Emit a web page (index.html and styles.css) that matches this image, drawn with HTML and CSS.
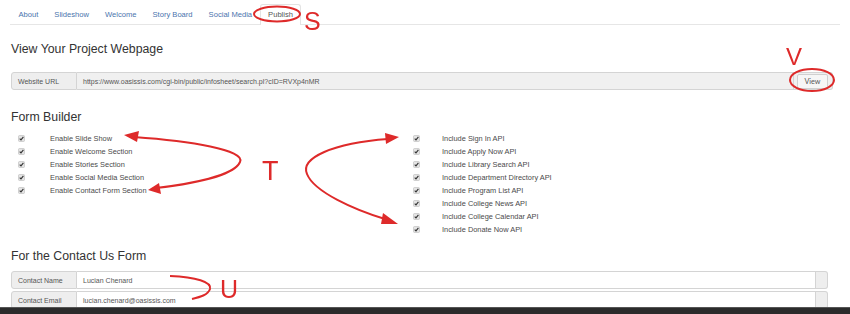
FILE: index.html
```html
<!DOCTYPE html>
<html>
<head>
<meta charset="utf-8">
<link rel="stylesheet" href="styles.css">
</head>
<body>
<nav class="tabs">
  <a class="tab">About</a>
  <a class="tab">Slideshow</a>
  <a class="tab">Welcome</a>
  <a class="tab">Story Board</a>
  <a class="tab">Social Media</a>
  <a class="tab active">Publish</a>
</nav>

<main class="page">
  <h2 class="title first">View Your Project Webpage</h2>
  <div class="group url">
    <span class="addon">Website URL</span>
    <span class="field">https://www.oasissis.com/cgi-bin/public/infosheet/search.pl?cID=RVXp4nMR</span>
    <span class="addon-btn"><button class="btn">View</button></span>
  </div>

  <h2 class="title builder">Form Builder</h2>
  <div class="checks">
    <ul class="col">
      <li class="row"><svg class="cb" viewBox="0 0 7 7"><rect x="0.5" y="0.5" width="6" height="6" rx="1" fill="#e4e4e4" stroke="#bbb" stroke-width="0.6"/><path d="M1.7 3.6 L3 4.9 L5.4 1.9" fill="none" stroke="#333" stroke-width="1.1"/></svg><span>Enable Slide Show</span></li>
      <li class="row"><svg class="cb" viewBox="0 0 7 7"><rect x="0.5" y="0.5" width="6" height="6" rx="1" fill="#e4e4e4" stroke="#bbb" stroke-width="0.6"/><path d="M1.7 3.6 L3 4.9 L5.4 1.9" fill="none" stroke="#333" stroke-width="1.1"/></svg><span>Enable Welcome Section</span></li>
      <li class="row"><svg class="cb" viewBox="0 0 7 7"><rect x="0.5" y="0.5" width="6" height="6" rx="1" fill="#e4e4e4" stroke="#bbb" stroke-width="0.6"/><path d="M1.7 3.6 L3 4.9 L5.4 1.9" fill="none" stroke="#333" stroke-width="1.1"/></svg><span>Enable Stories Section</span></li>
      <li class="row"><svg class="cb" viewBox="0 0 7 7"><rect x="0.5" y="0.5" width="6" height="6" rx="1" fill="#e4e4e4" stroke="#bbb" stroke-width="0.6"/><path d="M1.7 3.6 L3 4.9 L5.4 1.9" fill="none" stroke="#333" stroke-width="1.1"/></svg><span>Enable Social Media Section</span></li>
      <li class="row"><svg class="cb" viewBox="0 0 7 7"><rect x="0.5" y="0.5" width="6" height="6" rx="1" fill="#e4e4e4" stroke="#bbb" stroke-width="0.6"/><path d="M1.7 3.6 L3 4.9 L5.4 1.9" fill="none" stroke="#333" stroke-width="1.1"/></svg><span>Enable Contact Form Section</span></li>
    </ul>
    <ul class="col">
      <li class="row"><svg class="cb" viewBox="0 0 7 7"><rect x="0.5" y="0.5" width="6" height="6" rx="1" fill="#e4e4e4" stroke="#bbb" stroke-width="0.6"/><path d="M1.7 3.6 L3 4.9 L5.4 1.9" fill="none" stroke="#333" stroke-width="1.1"/></svg><span>Include Sign In API</span></li>
      <li class="row"><svg class="cb" viewBox="0 0 7 7"><rect x="0.5" y="0.5" width="6" height="6" rx="1" fill="#e4e4e4" stroke="#bbb" stroke-width="0.6"/><path d="M1.7 3.6 L3 4.9 L5.4 1.9" fill="none" stroke="#333" stroke-width="1.1"/></svg><span>Include Apply Now API</span></li>
      <li class="row"><svg class="cb" viewBox="0 0 7 7"><rect x="0.5" y="0.5" width="6" height="6" rx="1" fill="#e4e4e4" stroke="#bbb" stroke-width="0.6"/><path d="M1.7 3.6 L3 4.9 L5.4 1.9" fill="none" stroke="#333" stroke-width="1.1"/></svg><span>Include Library Search API</span></li>
      <li class="row"><svg class="cb" viewBox="0 0 7 7"><rect x="0.5" y="0.5" width="6" height="6" rx="1" fill="#e4e4e4" stroke="#bbb" stroke-width="0.6"/><path d="M1.7 3.6 L3 4.9 L5.4 1.9" fill="none" stroke="#333" stroke-width="1.1"/></svg><span>Include Department Directory API</span></li>
      <li class="row"><svg class="cb" viewBox="0 0 7 7"><rect x="0.5" y="0.5" width="6" height="6" rx="1" fill="#e4e4e4" stroke="#bbb" stroke-width="0.6"/><path d="M1.7 3.6 L3 4.9 L5.4 1.9" fill="none" stroke="#333" stroke-width="1.1"/></svg><span>Include Program List API</span></li>
      <li class="row"><svg class="cb" viewBox="0 0 7 7"><rect x="0.5" y="0.5" width="6" height="6" rx="1" fill="#e4e4e4" stroke="#bbb" stroke-width="0.6"/><path d="M1.7 3.6 L3 4.9 L5.4 1.9" fill="none" stroke="#333" stroke-width="1.1"/></svg><span>Include College News API</span></li>
      <li class="row"><svg class="cb" viewBox="0 0 7 7"><rect x="0.5" y="0.5" width="6" height="6" rx="1" fill="#e4e4e4" stroke="#bbb" stroke-width="0.6"/><path d="M1.7 3.6 L3 4.9 L5.4 1.9" fill="none" stroke="#333" stroke-width="1.1"/></svg><span>Include College Calendar API</span></li>
      <li class="row"><svg class="cb" viewBox="0 0 7 7"><rect x="0.5" y="0.5" width="6" height="6" rx="1" fill="#e4e4e4" stroke="#bbb" stroke-width="0.6"/><path d="M1.7 3.6 L3 4.9 L5.4 1.9" fill="none" stroke="#333" stroke-width="1.1"/></svg><span>Include Donate Now API</span></li>
    </ul>
  </div>

  <h2 class="title contact">For the Contact Us Form</h2>
  <div class="group plain">
    <span class="addon">Contact Name</span>
    <span class="field white">Lucian Chenard</span>
    <span class="addon tail"></span>
  </div>
  <div class="group plain">
    <span class="addon">Contact Email</span>
    <span class="field white">lucian.chenard@oasissis.com</span>
    <span class="addon tail"></span>
  </div>
</main>

<div class="taskbar"></div>

<svg class="marks" width="850" height="314" viewBox="0 0 850 314">
  <g fill="none" stroke="#de2a2a" stroke-width="2">
    <ellipse cx="277" cy="14" rx="23" ry="7.5"/>
    <ellipse cx="812" cy="80" rx="22" ry="11"/>
    <path d="M134 137 C190 141 246 150 240 162 C234 176 190 184 156 188"/>
    <path d="M388 139 C333 143 300 158 307 174 C314 192 355 210 385 219"/>
    <path d="M170 276 C196 277 212 282 210 289 C208 295 200 297 192 299"/>
  </g>
  <g fill="#de2a2a">
    <path d="M124 135 L139 131 L137 142 Z"/>
    <path d="M148 190 L159 183 L161 194 Z"/>
    <path d="M399 137 L385 133 L386 144 Z"/>
    <path d="M398 224 L383 213 L381 224 Z"/>
  </g>
  <text class="mk" x="304" y="30" font-size="25">S</text>
  <text class="mk" x="786" y="65" font-size="24">V</text>
  <text class="mk" x="262" y="180" font-size="27">T</text>
  <text class="mk" x="220" y="298" font-size="25">U</text>
</svg>
</body>
</html>
```

FILE: styles.css
```css
* { box-sizing: border-box; }

html, body {
  margin: 0;
  padding: 0;
  background: #ffffff;
  font-family: "Liberation Sans", Arial, sans-serif;
  color: #333;
  overflow: hidden;
}

.tabs {
  display: flex;
  margin: 0 10px;
  padding-top: 4px;
  border-bottom: 1px solid #e6e6e6;
}

.tab {
  display: block;
  font-size: 7.6px;
  line-height: 9px;
  padding: 5px 7px 5px;
  color: #4a74ad;
  border: 1px solid transparent;
  border-bottom: none;
  border-radius: 3px 3px 0 0;
}

.tab:first-child { padding-left: 7.5px; }

.tab.active {
  color: #555;
  border-color: #e3e3e3;
  background: #fff;
  margin-bottom: -1px;
  padding-bottom: 6px;
}

.page {
  padding: 0 17px 0 11px;
}

.title {
  margin: 0;
  font-weight: normal;
  font-size: 12.3px;
  line-height: 15px;
  color: #333;
}

.title.first { margin-top: 17px; }
.title.builder { margin-top: 20px; }
.title.contact { margin-top: 13px; }

.group {
  display: flex;
  align-items: stretch;
  height: 18px;
  font-size: 7px;
  color: #555;
}

.group.url { margin-top: 15px; }

.group.plain { margin-right: 5px; }
.group.plain + .group.plain { margin-top: 2px; }
.title.contact + .group { margin-top: 7px; }

.addon {
  width: 66px;
  flex: none;
  display: flex;
  align-items: center;
  padding-left: 6px;
  background: #eeeeee;
  border: 1px solid #d4d4d4;
  border-radius: 3px 0 0 3px;
  color: #555;
}

.addon.tail {
  width: 12px;
  padding: 0;
  border-left: none;
  border-radius: 0 3px 3px 0;
}

.field {
  flex: 1;
  display: flex;
  align-items: center;
  padding-left: 6px;
  background: #f0f0f0;
  border: 1px solid #d4d4d4;
  border-left: none;
  color: #555;
}

.field.white { background: #fff; }

.addon-btn {
  flex: none;
  display: flex;
  align-items: center;
  padding: 0 4px 0 3px;
  background: #f0f0f0;
  border: 1px solid #d4d4d4;
  border-left: none;
  border-radius: 0 3px 3px 0;
}

.btn {
  width: 31px;
  height: 15px;
  padding: 0;
  font-family: Lato, "Liberation Sans", sans-serif;
  font-size: 7.2px;
  color: #555;
  background: #f6f6f6;
  border: 1px solid #d0d0d0;
  border-radius: 2px;
}

.checks {
  display: grid;
  grid-template-columns: 395px 395px;
  margin-top: 7px;
}

.col {
  list-style: none;
  margin: 0;
  padding: 0;
}

.row {
  display: flex;
  align-items: center;
  height: 13px;
  font-size: 7.4px;
  color: #4a4a4a;
}

.cb {
  width: 7px;
  height: 7px;
  margin-left: 7px;
  margin-right: 25px;
  flex: none;
}

.col + .col .cb { margin-right: 22px; }

.taskbar {
  position: fixed;
  left: 0;
  right: 0;
  bottom: 0;
  height: 7px;
  background: #2b2b2b;
  border-top: 1px solid #555;
}

.marks {
  position: absolute;
  left: 0;
  top: 0;
  pointer-events: none;
}

.mk {
  fill: #de2a2a;
  font-family: "Liberation Sans", Arial, sans-serif;
}
```
